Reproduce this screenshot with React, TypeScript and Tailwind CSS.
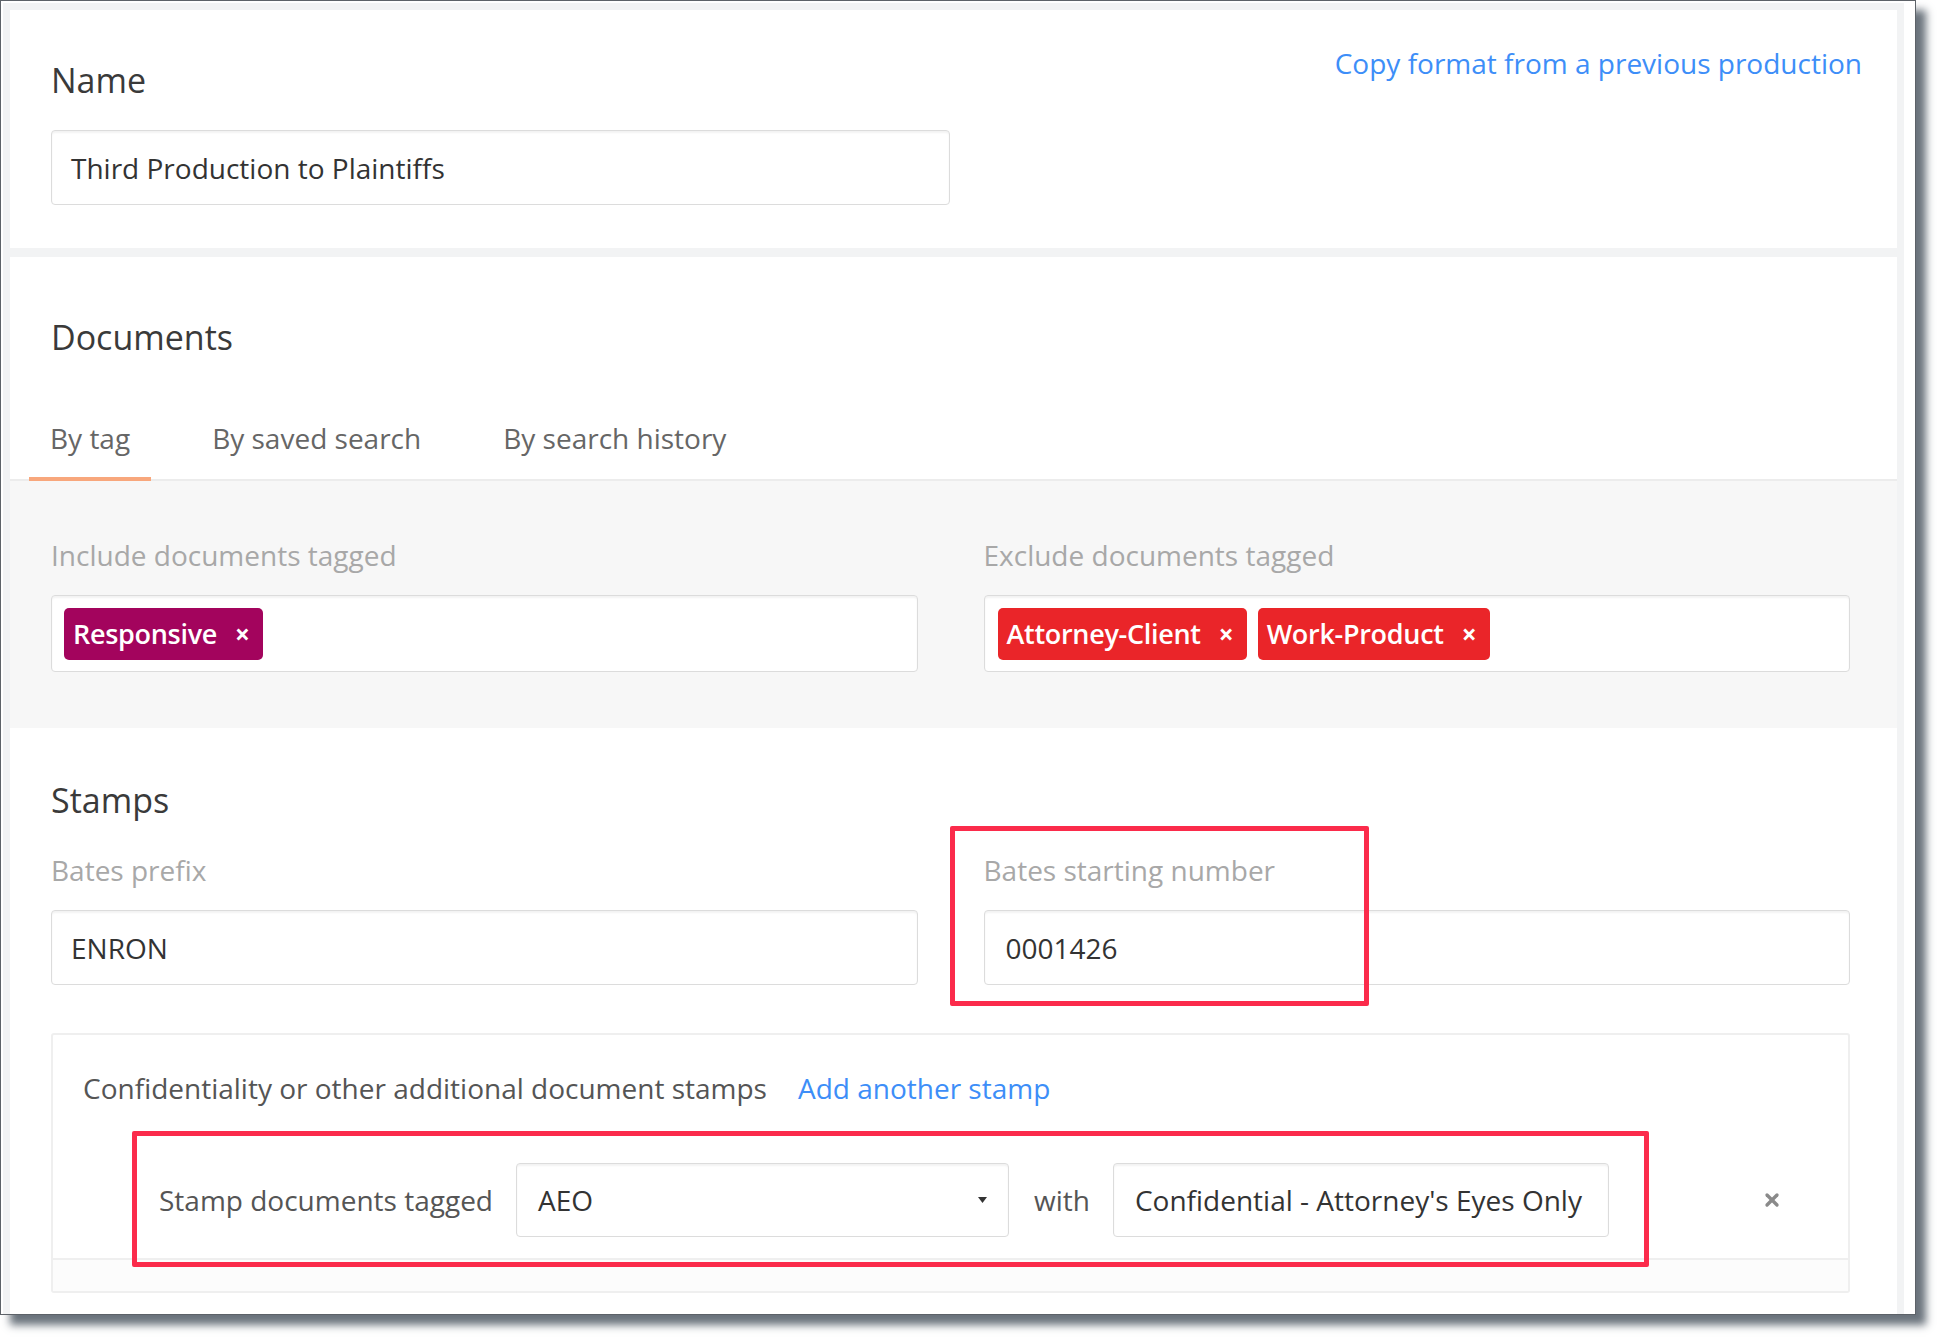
import { X } from 'lucide-react'

const tabs = ['By tag', 'By saved search', 'By search history']

function Tag({ label, color }: { label: string; color: string }) {
  return (
    <span className={`flex items-center h-[52px] rounded-[5px] pl-[9px] pr-[13px] gap-[18px] text-white ${color}`}>
      <span className="text-[27px] font-semibold leading-none tracking-[-0.3px]">{label}</span>
      <span className="text-[26px] font-bold leading-none">×</span>
    </span>
  )
}

function Field({ children, className = '' }: { children?: React.ReactNode; className?: string }) {
  return (
    <div
      className={`flex items-center bg-white border border-[#dcdcdc] rounded-[4px] shadow-[inset_0_2px_2px_rgba(0,0,0,0.05)] text-[28px] text-[#333] ${className}`}
    >
      {children}
    </div>
  )
}

export default function App() {
  return (
    <div className="min-h-screen bg-white font-['Open_Sans',sans-serif]">
      <div className="relative w-[1916px] h-[1315px] border border-[#5d6268] bg-white overflow-hidden pt-[2px] pl-[2px] pr-[11px] shadow-[10px_10px_8px_rgba(90,100,110,0.9)]">
        <div className="flex flex-col h-full gap-[9px] border-[7px] border-b-0 border-[#f2f3f4] bg-[#f2f3f4]">
          {/* name */}
          <section className="bg-white pt-[34px] pb-[43px] pl-[41px] pr-[47px]">
            <div className="flex items-start justify-between">
              <h2 className="mt-[13px] text-[34px] leading-[46px] text-[#3a3a3a]">Name</h2>
              <a className="mr-[-12px] text-[28px] leading-[38px] text-[#3d8ef8]">Copy format from a previous production</a>
            </div>
            <Field className="mt-[27px] w-[899px] h-[75px] pl-[19px]">Third Production to Plaintiffs</Field>
          </section>

          <div className="flex-1 flex flex-col bg-white">
            {/* documents */}
            <section>
              <h2 className="pt-[57px] pl-[41px] text-[34px] leading-[46px] text-[#3a3a3a]">Documents</h2>
              <div className="mt-[59px] flex gap-[40px] pl-[19px] border-b-2 border-[#ececec]">
                {tabs.map((t, i) => (
                  <div
                    key={t}
                    className={`px-[21px] pb-[20px] mb-[-2px] border-b-4 text-[28px] leading-[38px] text-[#666] ${
                      i === 0 ? 'border-[#f8a77c]' : 'border-transparent'
                    }`}
                  >
                    {t}
                  </div>
                ))}
              </div>
              <div className="grid grid-cols-2 gap-x-[66px] bg-[#f7f7f7] pt-[55px] pb-[56px] pl-[41px] pr-[47px]">
                <div>
                  <p className="text-[28px] leading-[38px] text-[#a8a8a8]">Include documents tagged</p>
                  <Field className="mt-[21px] h-[77px] pl-[12px] gap-[11px]">
                    <Tag label="Responsive" color="bg-[#a3045d]" />
                  </Field>
                </div>
                <div>
                  <p className="text-[28px] leading-[38px] text-[#a8a8a8]">Exclude documents tagged</p>
                  <Field className="mt-[21px] h-[77px] pl-[13px] gap-[11px]">
                    <Tag label="Attorney-Client" color="bg-[#ea2529]" />
                    <Tag label="Work-Product" color="bg-[#ea2529]" />
                  </Field>
                </div>
              </div>
            </section>

            {/* stamps */}
            <section className="flex-1 pt-[49px] pl-[41px] pr-[47px]">
              <h2 className="text-[34px] leading-[46px] text-[#3a3a3a]">Stamps</h2>
              <div className="mt-[28px] grid grid-cols-2 gap-x-[66px]">
                <div>
                  <p className="text-[28px] leading-[38px] text-[#a8a8a8]">Bates prefix</p>
                  <Field className="mt-[21px] h-[75px] pl-[19px]">ENRON</Field>
                </div>
                <div>
                  <p className="text-[28px] leading-[38px] text-[#a8a8a8]">Bates starting number</p>
                  <Field className="mt-[21px] h-[75px] pl-[21px]">0001426</Field>
                </div>
              </div>

              <div className="mt-[48px] border-2 border-[#efefef] rounded-[3px]">
                <div className="flex items-center gap-[31px] pt-[34px] pl-[30px] text-[28px] leading-[38px]">
                  <span className="text-[#555]">Confidentiality or other additional document stamps</span>
                  <a className="text-[#3d8ef8]">Add another stamp</a>
                </div>
                <div className="mt-[56px] pb-[21px] border-b-2 border-[#efefef]">
                  <div className="flex items-center h-[74px] pl-[106px] text-[28px] text-[#555]">
                    <span>Stamp documents tagged</span>
                    <Field className="ml-[23px] w-[493px] h-[74px] pl-[21px] pr-[21px] justify-between">
                      <span>AEO</span>
                      <svg width="9" height="6" viewBox="0 0 9 6">
                        <path d="M0 0h9L4.5 6z" fill="#333" />
                      </svg>
                    </Field>
                    <span className="ml-[25px]">with</span>
                    <Field className="ml-[23px] w-[496px] h-[74px] pl-[21px]">Confidential - Attorney's Eyes Only</Field>
                    <X className="ml-auto mr-[66px] w-[20px] h-[20px] text-[#8a8a8a]" strokeWidth={4} />
                  </div>
                </div>
                <div className="h-[31px] bg-[#fcfcfc]" />
              </div>
            </section>
          </div>
        </div>

        {/* highlight boxes */}
        <div className="absolute left-[949px] top-[825px] w-[419px] h-[180px] border-[5px] border-[#fb2b4b] rounded-[2px]" />
        <div className="absolute left-[131px] top-[1130px] w-[1517px] h-[136px] border-[5px] border-[#fb2b4b] rounded-[2px]" />
      </div>
    </div>
  )
}
